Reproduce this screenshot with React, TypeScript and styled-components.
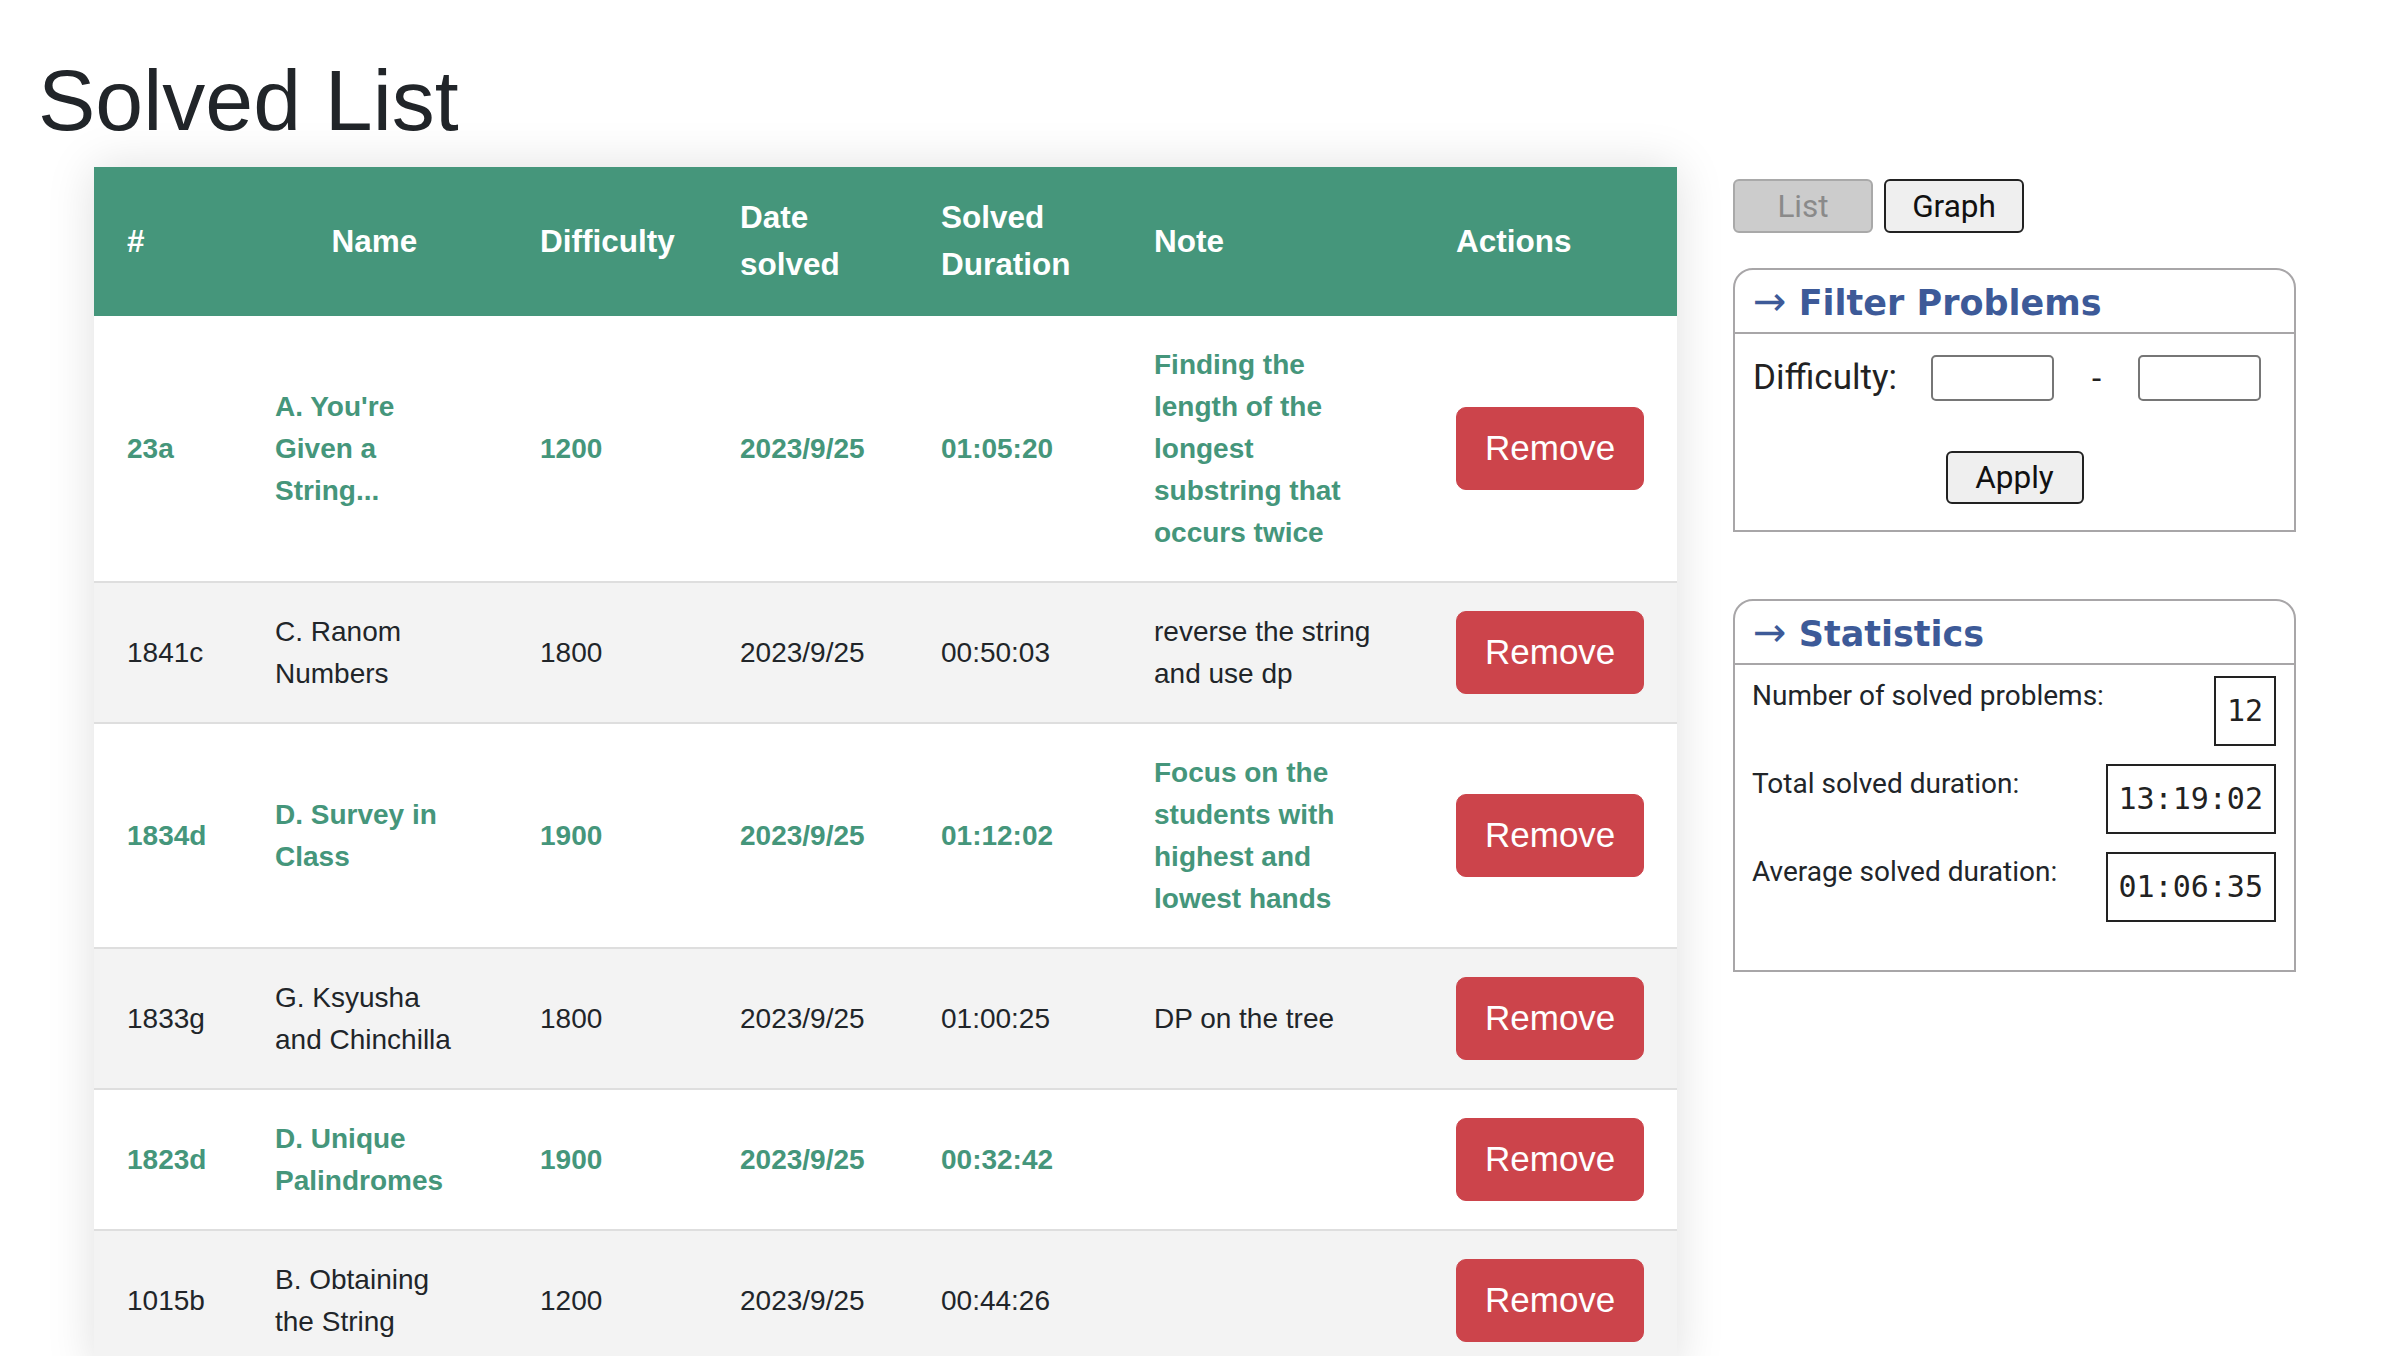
import React from 'react';
import styled, { createGlobalStyle } from 'styled-components';

interface Problem {
  id: string;
  name: string;
  difficulty: number;
  date: string;
  duration: string;
  note: string;
  starred: boolean;
}

const problems: Problem[] = [
  { id: '23a', name: "A. You're Given a String...", difficulty: 1200, date: '2023/9/25', duration: '01:05:20', note: 'Finding the length of the longest substring that occurs twice', starred: true },
  { id: '1841c', name: 'C. Ranom Numbers', difficulty: 1800, date: '2023/9/25', duration: '00:50:03', note: 'reverse the string and use dp', starred: false },
  { id: '1834d', name: 'D. Survey in Class', difficulty: 1900, date: '2023/9/25', duration: '01:12:02', note: 'Focus on the students with highest and lowest hands', starred: true },
  { id: '1833g', name: 'G. Ksyusha and Chinchilla', difficulty: 1800, date: '2023/9/25', duration: '01:00:25', note: 'DP on the tree', starred: false },
  { id: '1823d', name: 'D. Unique Palindromes', difficulty: 1900, date: '2023/9/25', duration: '00:32:42', note: '', starred: true },
  { id: '1015b', name: 'B. Obtaining the String', difficulty: 1200, date: '2023/9/25', duration: '00:44:26', note: '', starred: false },
];

const columns: { label: string; width: number; center?: boolean }[] = [
  { label: '#', width: 148 },
  { label: 'Name', width: 265, center: true },
  { label: 'Difficulty', width: 200 },
  { label: 'Date solved', width: 201 },
  { label: 'Solved Duration', width: 213 },
  { label: 'Note', width: 302 },
  { label: 'Actions', width: 254 },
];

const stats = [
  { label: 'Number of solved problems:', value: '12' },
  { label: 'Total solved duration:', value: '13:19:02' },
  { label: 'Average solved duration:', value: '01:06:35' },
];

const GlobalStyle = createGlobalStyle`
  html, body {
    margin: 0;
    padding: 0;
    background: #fff;
    overflow: hidden;
  }
  body {
    font-family: "Liberation Sans", Arial, sans-serif;
    color: #212529;
  }
  * {
    box-sizing: border-box;
  }
`;

const Page = styled.div`
  padding: 49px 38px 0 38px;
`;

const Title = styled.h1`
  font-size: 86px;
  font-weight: 500;
  line-height: 1.2;
  margin: 0 0 15px 0;
  color: #212529;
`;

const Layout = styled.div`
  display: flex;
  align-items: flex-start;
  gap: 56px;
  margin-left: 56px;
`;

const TableCard = styled.div`
  width: 1583px;
  flex-shrink: 0;
  box-shadow: 0 0 45px rgba(0, 0, 0, 0.13);
`;

const Table = styled.table`
  width: 100%;
  table-layout: fixed;
  border-collapse: collapse;
`;

const HeadCell = styled.th<{ $center?: boolean }>`
  background: #45967b;
  color: #fff;
  font-size: 31.5px;
  font-weight: 700;
  line-height: 1.5;
  padding: 27px 33px;
  text-align: ${p => (p.$center ? 'center' : 'left')};
  vertical-align: middle;
`;

const Row = styled.tr<{ $starred: boolean }>`
  background: ${p => (p.$starred ? '#ffffff' : '#f3f3f3')};
  color: ${p => (p.$starred ? '#45967b' : '#212529')};
  font-weight: ${p => (p.$starred ? 700 : 400)};
`;

const Cell = styled.td`
  font-size: 28px;
  line-height: 1.5;
  padding: 28px 33px 27px 33px;
  vertical-align: middle;
  border-bottom: 2px solid #dedede;
`;

const NameText = styled.div`
  max-width: 192px;
`;

const NoteText = styled.div`
  max-width: 226px;
`;

const RemoveButton = styled.button`
  font-family: "Liberation Sans", Arial, sans-serif;
  font-size: 35px;
  line-height: 1.5;
  padding: 14px 28px;
  color: #fff;
  background: #cc444b;
  border: 1px solid #cc444b;
  border-radius: 10px;
  white-space: nowrap;
  cursor: pointer;
`;

const Sidebar = styled.div`
  width: 563px;
  flex-shrink: 0;
  padding-top: 12px;
  font-family: Roboto, "Liberation Sans", sans-serif;
`;

const ViewToggle = styled.div`
  display: flex;
  gap: 11px;
  margin-bottom: 35px;
`;

const ToggleButton = styled.button<{ $active?: boolean }>`
  width: 140px;
  height: 54px;
  padding: 0;
  font-family: Roboto, "Liberation Sans", sans-serif;
  font-size: 31.5px;
  border-radius: 6px;
  border: 2px solid ${p => (p.$active ? '#a9a9a9' : '#222')};
  background: ${p => (p.$active ? '#cccccc' : '#efefef')};
  color: ${p => (p.$active ? '#8a8a8a' : '#111')};
`;

const Panel = styled.section`
  border: 2px solid #a8a6a8;
  border-radius: 20px 20px 0 0;
  margin-bottom: 67px;
`;

const PanelHeader = styled.h2`
  margin: 0;
  padding: 11px 18px 9px 18px;
  font-family: "DejaVu Sans", Verdana, sans-serif;
  font-size: 35px;
  font-weight: 700;
  line-height: 40px;
  color: #3d5a98;
  border-bottom: 2px solid #a8a6a8;
`;

const Arrow = styled.span`
  font-weight: 400;
  font-size: 40px;
  line-height: 1;
`;

const FilterBody = styled.div`
  padding: 21px 18px 26px 18px;
`;

const FilterRow = styled.div`
  display: flex;
  align-items: center;
  height: 46px;
`;

const FilterLabel = styled.label`
  font-size: 35px;
  line-height: 1.2;
  color: #222;
  margin-right: 34px;
`;

const RangeInput = styled.input`
  width: 123px;
  height: 46px;
  border: 2px solid #767676;
  border-radius: 5px;
  background: #fff;
`;

const Dash = styled.span`
  font-size: 33px;
  color: #222;
  margin: 0 37px 0 38px;
`;

const ApplyRow = styled.div`
  display: flex;
  justify-content: center;
  margin-top: 50px;
`;

const ApplyButton = styled.button`
  width: 138px;
  height: 53px;
  padding: 0;
  font-family: Roboto, "Liberation Sans", sans-serif;
  font-size: 31.5px;
  color: #111;
  background: #efefef;
  border: 2px solid #222;
  border-radius: 6px;
`;

const StatsBody = styled.div`
  display: flex;
  flex-direction: column;
  gap: 18px;
  padding: 11px 18px 48px 17px;
`;

const StatRow = styled.div`
  display: flex;
  justify-content: space-between;
  align-items: flex-start;
`;

const StatLabel = styled.span`
  font-size: 28px;
  line-height: 40px;
  color: #212529;
`;

const StatValue = styled.span`
  font-family: "DejaVu Sans Mono", "Liberation Mono", monospace;
  font-size: 30px;
  line-height: 46px;
  padding: 10px 11px;
  border: 2px solid #222;
  color: #222;
`;

export default function App() {
  return (
    <Page>
      <GlobalStyle />
      <Title>Solved List</Title>
      <Layout>
        <TableCard>
          <Table>
            <thead>
              <tr>
                {columns.map(col => (
                  <HeadCell key={col.label} $center={col.center} style={{ width: col.width }}>
                    {col.label}
                  </HeadCell>
                ))}
              </tr>
            </thead>
            <tbody>
              {problems.map(p => (
                <Row key={p.id} $starred={p.starred}>
                  <Cell>{p.id}</Cell>
                  <Cell>
                    <NameText>{p.name}</NameText>
                  </Cell>
                  <Cell>{p.difficulty}</Cell>
                  <Cell>{p.date}</Cell>
                  <Cell>{p.duration}</Cell>
                  <Cell>
                    <NoteText>{p.note}</NoteText>
                  </Cell>
                  <Cell>
                    <RemoveButton>Remove</RemoveButton>
                  </Cell>
                </Row>
              ))}
            </tbody>
          </Table>
        </TableCard>

        <Sidebar>
          <ViewToggle>
            <ToggleButton $active disabled>List</ToggleButton>
            <ToggleButton>Graph</ToggleButton>
          </ViewToggle>

          <Panel>
            <PanelHeader>
              <Arrow>→</Arrow> Filter Problems
            </PanelHeader>
            <FilterBody>
              <FilterRow>
                <FilterLabel>Difficulty:</FilterLabel>
                <RangeInput type="text" />
                <Dash>-</Dash>
                <RangeInput type="text" />
              </FilterRow>
              <ApplyRow>
                <ApplyButton>Apply</ApplyButton>
              </ApplyRow>
            </FilterBody>
          </Panel>

          <Panel>
            <PanelHeader>
              <Arrow>→</Arrow> Statistics
            </PanelHeader>
            <StatsBody>
              {stats.map(s => (
                <StatRow key={s.label}>
                  <StatLabel>{s.label}</StatLabel>
                  <StatValue>{s.value}</StatValue>
                </StatRow>
              ))}
            </StatsBody>
          </Panel>
        </Sidebar>
      </Layout>
    </Page>
  );
}
